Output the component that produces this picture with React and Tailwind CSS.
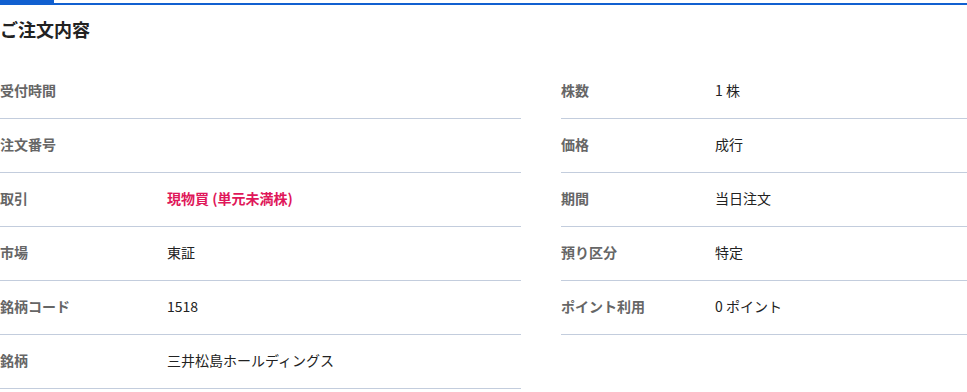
const left = [
  { label: "受付時間", value: "" },
  { label: "注文番号", value: "" },
  { label: "取引", value: "現物買 (単元未満株)", accent: true },
  { label: "市場", value: "東証" },
  { label: "銘柄コード", value: "1518" },
  { label: "銘柄", value: "三井松島ホールディングス" },
];

const right = [
  { label: "株数", value: "1 株" },
  { label: "価格", value: "成行" },
  { label: "期間", value: "当日注文" },
  { label: "預り区分", value: "特定" },
  { label: "ポイント利用", value: "0 ポイント" },
];

const Row = ({ row, labelWidth }) => (
  <div className="flex items-center h-[54px] pb-[2px] border-b border-[#c3cddd]">
    <div className={`${labelWidth} shrink-0 text-[14px] font-bold text-[#666]`}>{row.label}</div>
    <div className={row.accent ? "text-[14px] font-bold text-[#e0175a]" : "text-[14px] text-[#222]"}>
      {row.value}
    </div>
  </div>
);

export default function App() {
  return (
    <div
      className="w-[967px] h-[392px] overflow-hidden bg-white"
      style={{ fontFamily: '"Noto Sans CJK JP", "Noto Sans", sans-serif' }}
    >
      <div className="relative h-[5px]">
        <div className="absolute left-0 right-0 top-[3px] h-[2px] bg-[#1160d0]" />
        <div className="absolute left-0 top-0 w-[54px] h-[5px] bg-[#1160d0]" />
      </div>
      <h1 className="text-[18px] font-bold text-[#222] leading-[26px] mt-[11px] mb-[23px]">ご注文内容</h1>
      <div className="flex gap-[40px]">
        <div className="w-[521px] shrink-0">
          {left.map((row) => (
            <Row key={row.label} row={row} labelWidth="w-[167px]" />
          ))}
        </div>
        <div className="flex-1">
          {right.map((row) => (
            <Row key={row.label} row={row} labelWidth="w-[154px]" />
          ))}
        </div>
      </div>
    </div>
  );
}
